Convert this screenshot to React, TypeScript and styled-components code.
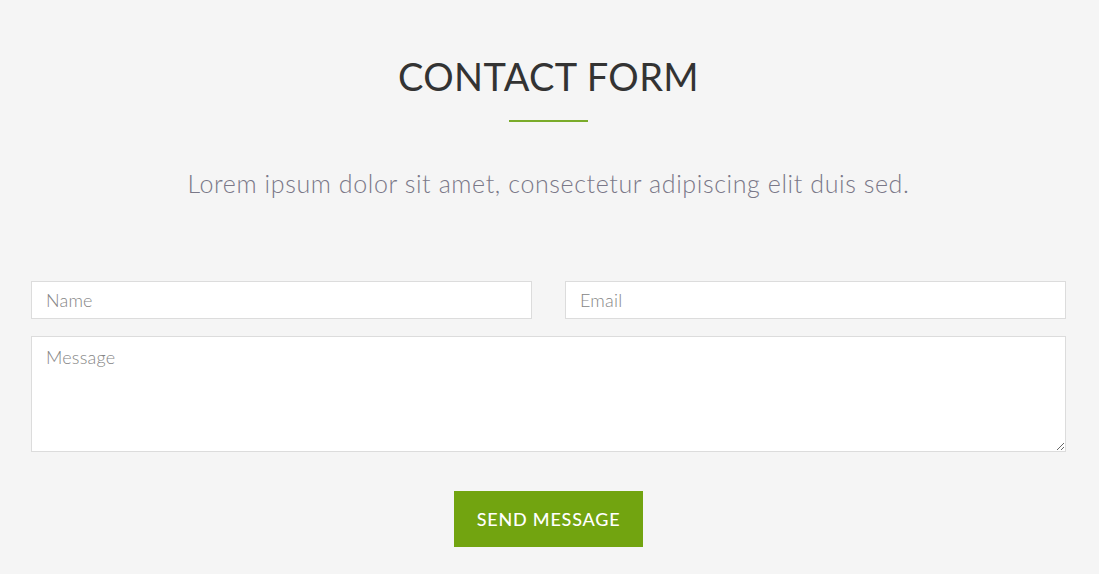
import React from "react";
import styled, { createGlobalStyle } from "styled-components";

const Global = createGlobalStyle`
  html, body { margin: 0; padding: 0; background: #f5f5f5; }
  body { font-family: "Lato", "Liberation Sans", sans-serif; }
  * { box-sizing: border-box; }
`;

const Section = styled.section`
  background: #f5f5f5;
  min-height: 574px;
  padding: 52px 33px 0 31px;
  display: flex;
  flex-direction: column;
  align-items: center;
`;

const Title = styled.h2`
  margin: 0;
  font-family: "Lato", sans-serif;
  font-weight: 400;
  font-size: 38px;
  line-height: 48px;
  letter-spacing: 0.4px;
  color: #333333;
`;

const Divider = styled.div`
  width: 79px;
  height: 2px;
  background: #7aab2a;
  margin-top: 20px;
`;

const Lead = styled.p`
  margin: 46px 0 0;
  font-family: "Lato", sans-serif;
  font-weight: 300;
  font-size: 25px;
  line-height: 30px;
  letter-spacing: 0.6px;
  color: #7a7888;
`;

const Form = styled.form`
  width: 100%;
  margin-top: 83px;
  display: flex;
  flex-direction: column;
  align-items: center;
`;

const Row = styled.div`
  width: 100%;
  display: grid;
  grid-template-columns: 1fr 1fr;
  column-gap: 33px;
`;

const fieldStyles = `
  width: 100%;
  background: #ffffff;
  border: 1px solid #dcdcdc;
  border-radius: 0;
  font-family: "Lato", sans-serif;
  font-weight: 300;
  font-size: 18px;
  letter-spacing: 0.2px;
  color: #555;
  outline: none;
  &::placeholder { color: #858585; opacity: 1; }
`;

const Input = styled.input`
  ${fieldStyles}
  height: 38px;
  padding: 0 14px;
`;

const TextArea = styled.textarea`
  ${fieldStyles}
  display: block;
  height: 116px;
  margin-top: 17px;
  padding: 9px 14px;
  resize: vertical;
`;

const Button = styled.button`
  margin-top: 39px;
  width: 189px;
  height: 56px;
  border: none;
  background: #72a410;
  color: #ffffff;
  font-family: "Lato", sans-serif;
  font-weight: 500;
  font-size: 18px;
  letter-spacing: 0.8px;
  text-transform: uppercase;
  cursor: pointer;
`;

export default function App() {
  return (
    <>
      <Global />
      <Section>
        <Title>CONTACT FORM</Title>
        <Divider />
        <Lead>Lorem ipsum dolor sit amet, consectetur adipiscing elit duis sed.</Lead>
        <Form onSubmit={(e) => e.preventDefault()}>
          <Row>
            <Input placeholder="Name" />
            <Input placeholder="Email" />
          </Row>
          <TextArea placeholder="Message" />
          <Button type="submit">Send Message</Button>
        </Form>
      </Section>
    </>
  );
}
